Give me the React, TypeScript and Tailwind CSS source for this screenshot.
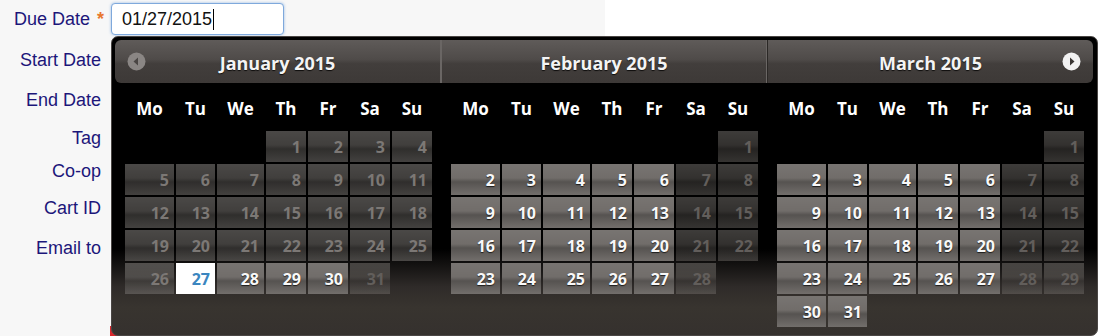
import React from 'react';

type Kind = 'active' | 'past' | 'weekend' | 'today' | 'blank';

const COLS = 'grid grid-cols-[49px_39px_47px_40px_40px_40px_40px] gap-[2px]';
const DAY_NAMES = ['Mo', 'Tu', 'We', 'Th', 'Fr', 'Sa', 'Su'];

const buildMonth = (offset: number, days: number, today?: number): { day: number; kind: Kind }[][] => {
  const cells: { day: number; kind: Kind }[] = [];
  for (let i = 0; i < offset; i++) cells.push({ day: 0, kind: 'blank' });
  for (let d = 1; d <= days; d++) {
    const col = (offset + d - 1) % 7;
    let kind: Kind = col >= 5 ? 'weekend' : 'active';
    if (today && d < today) kind = 'past';
    if (today && d === today) kind = 'today';
    cells.push({ day: d, kind });
  }
  while (cells.length % 7) cells.push({ day: 0, kind: 'blank' });
  const rows = [];
  for (let i = 0; i < cells.length; i += 7) rows.push(cells.slice(i, i + 7));
  return rows;
};

const months = [
  { title: 'January 2015', rows: buildMonth(3, 31, 27) },
  { title: 'February 2015', rows: buildMonth(6, 28) },
  { title: 'March 2015', rows: buildMonth(6, 31) },
];

const gloss =
  'bg-[linear-gradient(to_bottom,rgba(255,255,255,0.07)_0%,rgba(255,255,255,0.02)_45%,rgba(0,0,0,0.22)_58%,rgba(255,255,255,0.03)_100%)]';

const DayCell: React.FC<{ day: number; kind: Kind }> = ({ day, kind }) => {
  if (kind === 'blank') return <div className="h-[31px]" />;
  const styles: Record<Exclude<Kind, 'blank'>, string> = {
    active: `bg-[#6e6a67] ${gloss} text-[#f8f8f8] [text-shadow:0_1px_1px_rgba(0,0,0,0.7)]`,
    past: `bg-[rgba(112,107,103,0.55)] ${gloss} text-[#7c7875]`,
    weekend: `bg-[rgba(112,107,103,0.42)] ${gloss} text-[#625e5b]`,
    today: 'bg-white text-[#3b86c0]',
  };
  return (
    <div
      className={`h-[31px] flex items-center justify-end pr-[5px] text-[16px] font-bold leading-none ${styles[kind]}`}
    >
      {day}
    </div>
  );
};

const NavButton: React.FC<{ dir: 'prev' | 'next' }> = ({ dir }) => (
  <svg width="19" height="19" viewBox="0 0 19 19">
    <circle cx="9.5" cy="9.5" r="9" fill={dir === 'prev' ? '#8a8684' : '#f2f2f2'} />
    {dir === 'prev' ? (
      <polygon points="11,5.5 11,13.5 6.5,9.5" fill="#4a4644" />
    ) : (
      <polygon points="8,5.5 8,13.5 12.5,9.5" fill="#3a3634" />
    )}
  </svg>
);

const labels: { text: string; h: string; star?: boolean }[] = [
  { text: 'Due Date', h: 'h-[38px]', star: true },
  { text: 'Start Date', h: 'h-[44px]' },
  { text: 'End Date', h: 'h-[36px]' },
  { text: 'Tag', h: 'h-[40px]' },
  { text: 'Co-op', h: 'h-[26px]' },
  { text: 'Cart ID', h: 'h-[48px]' },
  { text: 'Email to', h: 'h-[32px]' },
];

export default function App() {
  return (
    <div className="relative h-[336px] w-[1099px] overflow-hidden bg-white flex font-['Liberation_Sans',Arial,sans-serif]">
      {/* form panel */}
      <div className="relative w-[605px] h-full bg-[#f7f7f7] flex">
        <div className="w-[101px] flex flex-col">
          {labels.map((l) => (
            <div key={l.text} className={`${l.h} flex items-center justify-end text-[18px] text-[#1c167a] whitespace-nowrap`}>
              {l.text}
              {l.star && <span className="ml-[7px] mr-[-3px] text-[#e8772e] font-bold">*</span>}
            </div>
          ))}
        </div>
        <div className="pl-[10px] pt-[3px]">
          <div className="w-[173px] h-[32px] rounded-[4px] border border-[#7fa9dc] bg-white shadow-[0_0_3px_rgba(90,150,220,0.6)] flex items-center pl-[10px] text-[18px] text-[#111]">
            01/27/2015
            <span className="ml-[1px] w-[1px] h-[21px] bg-black" />
          </div>
        </div>
        <div className="absolute left-[110px] top-[326px] w-[10px] h-[10px] bg-[#d9262b]" />
      </div>

      {/* datepicker popup */}
      <div className="absolute left-[111px] top-[36px] w-[987px] h-[300px] rounded-[7px] border border-[#4a4644] bg-[linear-gradient(to_bottom,#000_0px,#000_212px,#2f2b29_250px,#38342f_270px,#35312e_100%)] p-[3px] font-['Open_Sans',sans-serif]">
        <div className="flex">
          {months.map((m, i) => (
            <div key={m.title} className="w-[326px] flex flex-col">
              <div
                className={`relative h-[43px] flex items-center justify-center pt-[3px] bg-[linear-gradient(to_bottom,#5f5b59_0%,#4f4b49_45%,#423e3c_55%,#3d3937_100%)] ${
                  i === 0 ? 'rounded-l-[6px]' : 'border-l border-[#2b2826]'
                } ${i === 2 ? 'rounded-r-[6px]' : 'border-r border-[#6a6664]'}`}
              >
                {i === 0 && (
                  <div className="absolute left-[12px] top-[12px] flex">
                    <NavButton dir="prev" />
                  </div>
                )}
                {i === 2 && (
                  <div className="absolute right-[12px] top-[12px] flex">
                    <NavButton dir="next" />
                  </div>
                )}
                <span className="text-[18px] font-bold text-[#f4f4f4] [text-shadow:0_1px_1px_rgba(0,0,0,0.8)]">
                  {m.title}
                </span>
              </div>
              <div className="pl-[10px] pt-[13px]">
                <div className={`${COLS} h-[24px]`}>
                  {DAY_NAMES.map((d) => (
                    <div key={d} className="flex items-center justify-center text-[17px] font-bold text-white">
                      {d}
                    </div>
                  ))}
                </div>
                <div className="mt-[11px] flex flex-col gap-[2px]">
                  {m.rows.map((row, r) => (
                    <div key={r} className={COLS}>
                      {row.map((c, k) => (
                        <DayCell key={k} day={c.day} kind={c.kind} />
                      ))}
                    </div>
                  ))}
                </div>
              </div>
            </div>
          ))}
        </div>
      </div>
    </div>
  );
}
